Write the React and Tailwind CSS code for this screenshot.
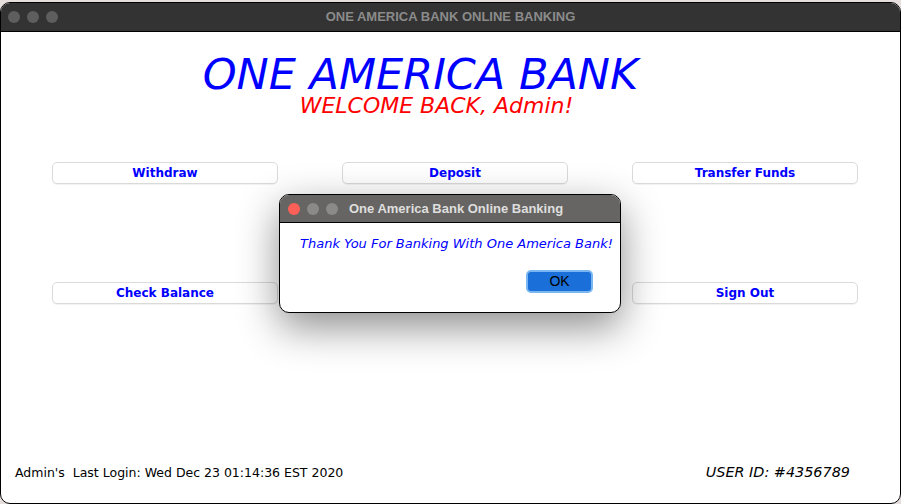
import React from 'react';

const sans = "font-['DejaVu_Sans',sans-serif]";

const Lights = ({ first, rest }) => (
    <div className="flex items-center gap-[7px]">
        <span className={`h-[12px] w-[12px] rounded-full ${first}`} />
        <span className={`h-[12px] w-[12px] rounded-full ${rest}`} />
        <span className={`h-[12px] w-[12px] rounded-full ${rest}`} />
    </div>
);

const ActionButton = ({ label }) => (
    <button className={`h-[22px] rounded-[5px] border border-[#dadada] bg-white shadow-[0_1px_0_rgba(0,0,0,0.05)] text-[12px] font-bold text-[#0000ff] leading-none ${sans}`}>
        {label}
    </button>
);

const App = () => {
    return (
        <div className="relative h-[504px] w-[901px] overflow-hidden bg-[#e6dedc]">
            <div className="mt-[2px] flex h-[502px] flex-col overflow-hidden rounded-[10px] border border-black bg-white">
                {/* title bar */}
                <div className="relative flex h-[29px] items-center bg-[#333333] px-[7px] border-b border-black">
                    <Lights first="bg-[#5e5e5e]" rest="bg-[#5e5e5e]" />
                    <div className="absolute inset-0 flex items-center justify-center font-['Liberation_Sans',sans-serif] text-[13px] font-bold text-[#8b8b8b]">
                        ONE AMERICA BANK ONLINE BANKING
                    </div>
                </div>

                <div className="flex flex-1 flex-col">
                    <div className={`flex flex-col items-center ${sans} italic`}>
                        <h1 className="mt-[21px] ml-[-60px] text-[43px] leading-[42px] text-[#0000ff]">ONE AMERICA BANK</h1>
                        <p className="ml-[-28px] text-[22px] leading-[22px] text-[#ff0000]">WELCOME BACK, Admin!</p>
                    </div>

                    <div className="mt-[45px] grid grid-cols-[226px_226px_226px] gap-x-[64px] gap-y-[98px] pl-[51px]">
                        <ActionButton label="Withdraw" />
                        <ActionButton label="Deposit" />
                        <ActionButton label="Transfer Funds" />
                        <ActionButton label="Check Balance" />
                        <ActionButton label="" />
                        <ActionButton label="Sign Out" />
                    </div>

                    <div className="mt-auto mb-[19px] flex items-center justify-between pl-[14px] pr-[50px]">
                        <span className={`text-[12.5px] text-black ${sans}`}>Admin's&nbsp; Last Login: Wed Dec 23 01:14:36 EST 2020</span>
                        <span className={`text-[14.4px] italic text-black ${sans}`}>USER ID: #4356789</span>
                    </div>
                </div>
            </div>

            {/* dialog */}
            <div className="absolute left-[279px] top-[194px] flex h-[119px] w-[342px] flex-col overflow-hidden rounded-[10px] border border-black bg-white shadow-[0_14px_40px_rgba(0,0,0,0.45)]">
                <div className="flex h-[28px] items-center gap-[11px] bg-[#676563] px-[8px] border-b border-black">
                    <Lights first="bg-[#fe5f57]" rest="bg-[#8c8a88]" />
                    <span className="font-['Liberation_Sans',sans-serif] text-[13px] font-bold text-[#dedede]">One America Bank Online Banking</span>
                </div>
                <p className={`mt-[11px] ml-[13px] text-center text-[13px] italic text-[#0000ff] ${sans}`}>Thank You For Banking With One America Bank!</p>
                <div className="mt-[16px] flex justify-end pr-[27px]">
                    <button className="h-[23px] w-[67px] rounded-[5px] border-2 border-[#7ab7f2] bg-[#1a6fd8] font-['Liberation_Sans',sans-serif] text-[14px] text-black leading-none">
                        OK
                    </button>
                </div>
            </div>
        </div>
    );
};

export default App;
